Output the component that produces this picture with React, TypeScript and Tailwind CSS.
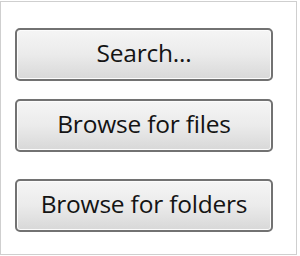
import React from 'react';

const BUTTONS = [
  { label: 'Search...', mt: 'mt-0' },
  { label: 'Browse for files', mt: 'mt-[18px]' },
  { label: 'Browse for folders', mt: 'mt-[27px]' },
];

const WinButton = ({ label, className }: { label: string; className: string }) => (
  <button
    className={`${className} h-[53px] w-[258px] rounded-[5px] border-2 border-[#727272] bg-gradient-to-b from-[#f5f5f5] via-[#ebebeb] to-[#d8d8d8] shadow-[inset_0_0_0_1px_#fcfcfc] text-[24.5px] font-medium leading-none text-[#141414] flex items-center justify-center tracking-[-0.2px] pb-[2px]`}
    style={{ fontFamily: '"Open Sans", "Noto Sans", sans-serif' }}
  >
    {label}
  </button>
);

export default function App() {
  return (
    <div className="w-[300px] h-[256px] bg-white pt-px pr-[3px] pb-px">
      <div className="h-full border-[1.5px] border-[#cfcfcf] pl-[14px] pt-[26px]">
        {BUTTONS.map((b) => (
          <WinButton key={b.label} label={b.label} className={b.mt} />
        ))}
      </div>
    </div>
  );
}
